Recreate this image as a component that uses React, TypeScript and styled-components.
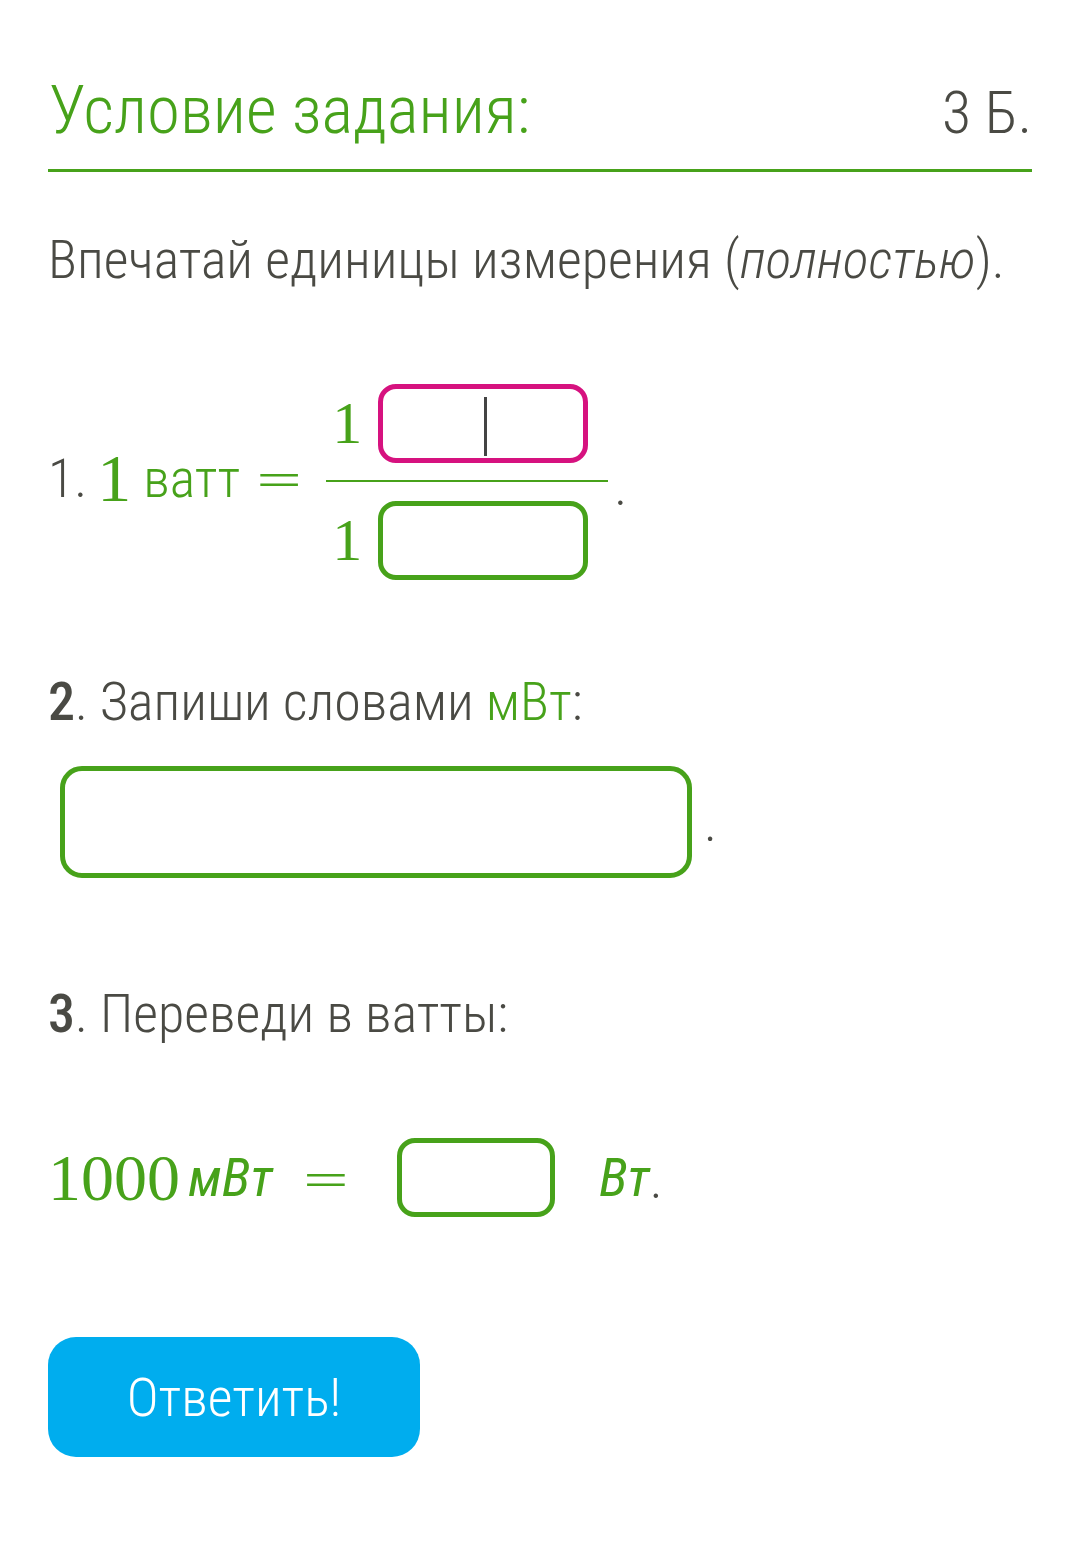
import React from "react";
import styled, { createGlobalStyle } from "styled-components";

const GREEN = "#47a21a";
const GREY = "#4a4a44";
const MAGENTA = "#d6127f";

const Global = createGlobalStyle`
  html, body { margin: 0; padding: 0; background: #fff; }
  body { font-family: Roboto, "Noto Sans", sans-serif; font-weight: 300; color: ${GREY}; }
`;

const Page = styled.div`
  width: 1080px;
  box-sizing: border-box;
  padding: 70px 48px 80px 48px;
`;

const Header = styled.div`
  display: flex;
  justify-content: space-between;
  align-items: baseline;
  padding: 0 0 19px 1px;
  border-bottom: 3px solid ${GREEN};
`;

const Title = styled.h1`
  margin: 0;
  font-size: 67px;
  font-weight: 300;
  line-height: 80px;
  color: ${GREEN};
  font-stretch: condensed;
`;

const Score = styled.span`
  font-size: 60px;
  font-weight: 300;
  color: ${GREY};
  font-stretch: condensed;
`;

const Text = styled.p<{ $top?: number }>`
  margin: ${(p) => p.$top ?? 0}px 0 0 0;
  font-size: 54px;
  line-height: 64px;
  font-weight: 300;
  font-stretch: condensed;
  color: ${GREY};
`;

const Num = styled.b`
  font-weight: 500;
`;

const G = styled.span`
  color: ${GREEN};
`;

const MathRow = styled.div<{ $top: number }>`
  display: flex;
  align-items: center;
  margin: ${(p) => p.$top}px 0 0 0;
  font-size: 54px;
  font-stretch: condensed;
`;

const SerifNum = styled.span<{ $size: number }>`
  font-family: "Liberation Serif", "DejaVu Serif", serif;
  font-size: ${(p) => p.$size}px;
  font-weight: 400;
  color: ${GREEN};
`;

const Word = styled.span<{ $italic?: boolean; $ml: number }>`
  color: ${GREEN};
  margin-left: ${(p) => p.$ml}px;
  font-style: ${(p) => (p.$italic ? "italic" : "normal")};
  font-weight: ${(p) => (p.$italic ? 400 : 300)};
`;

const Eq = styled.span<{ $ml: number; $mr: number }>`
  font-family: "DejaVu Sans", sans-serif;
  font-weight: 300;
  color: ${GREEN};
  font-size: 60px;
  margin: 0 ${(p) => p.$mr}px 0 ${(p) => p.$ml}px;
`;

const Fraction = styled.div`
  display: flex;
  flex-direction: column;
  align-items: stretch;
  position: relative;
  top: 4px;
`;

const FracPart = styled.div`
  display: flex;
  align-items: center;
  padding: 0 20px 0 6px;
  gap: 16px;
  height: 79px;
`;

const FracLine = styled.div`
  height: 2px;
  background: ${GREEN};
  margin: 17px 0 19px 0;
`;

const Box = styled.div<{ $w: number; $h: number; $c: string; $bw: number; $r: number }>`
  position: relative;
  box-sizing: border-box;
  width: ${(p) => p.$w}px;
  height: ${(p) => p.$h}px;
  border: ${(p) => p.$bw}px solid ${(p) => p.$c};
  border-radius: ${(p) => p.$r}px;
  background: #fff;
`;

const Caret = styled.div`
  position: absolute;
  left: 101px;
  top: 8px;
  width: 3px;
  height: 59px;
  background: #444;
`;

const Dot = styled.span<{ $ml: number; $dy: number }>`
  color: ${GREY};
  font-size: 54px;
  margin-left: ${(p) => p.$ml}px;
  position: relative;
  top: ${(p) => p.$dy}px;
`;

const BoxRow = styled.div`
  display: flex;
  align-items: center;
  margin: 32px 0 0 12px;
`;

const Button = styled.button`
  margin-top: 120px;
  width: 372px;
  height: 120px;
  border: none;
  border-radius: 28px;
  background: #00adee;
  color: #fff;
  font-family: Roboto, sans-serif;
  font-weight: 300;
  font-stretch: condensed;
  font-size: 54px;
  cursor: pointer;
`;

export default function App() {
  return (
    <Page>
      <Global />
      <Header>
        <Title>Условие задания:</Title>
        <Score>3 Б.</Score>
      </Header>

      <Text $top={56}>
        Впечатай единицы измерения (<i>полностью</i>).
      </Text>

      <MathRow $top={88}>
        <span>1.</span>
        <SerifNum $size={68} style={{ marginLeft: 10 }}>1</SerifNum>
        <Word $ml={12}>ватт</Word>
        <Eq $ml={14} $mr={22}>=</Eq>
        <Fraction>
          <FracPart>
            <SerifNum $size={60}>1</SerifNum>
            <Box $w={210} $h={79} $c={MAGENTA} $bw={5} $r={18}>
              <Caret />
            </Box>
          </FracPart>
          <FracLine />
          <FracPart>
            <SerifNum $size={60}>1</SerifNum>
            <Box $w={210} $h={79} $c={GREEN} $bw={5} $r={18} />
          </FracPart>
        </Fraction>
        <Dot $ml={6} $dy={8}>.</Dot>
      </MathRow>

      <Text $top={94}>
        <Num>2</Num>. Запиши словами <G>мВт</G>:
      </Text>

      <BoxRow>
        <Box $w={632} $h={112} $c={GREEN} $bw={5} $r={22} />
        <Dot $ml={12} $dy={0}>.</Dot>
      </BoxRow>

      <Text $top={104}>
        <Num>3</Num>. Переведи в ватты:
      </Text>

      <MathRow $top={92}>
        <SerifNum $size={66}>1000</SerifNum>
        <Word $italic $ml={8}>мВт</Word>
        <Eq $ml={28} $mr={46}>=</Eq>
        <Box $w={158} $h={79} $c={GREEN} $bw={5} $r={18} />
        <Word $italic $ml={44}>Вт</Word>
        <Dot $ml={0} $dy={2}>.</Dot>
      </MathRow>

      <Button>Ответить!</Button>
    </Page>
  );
}
